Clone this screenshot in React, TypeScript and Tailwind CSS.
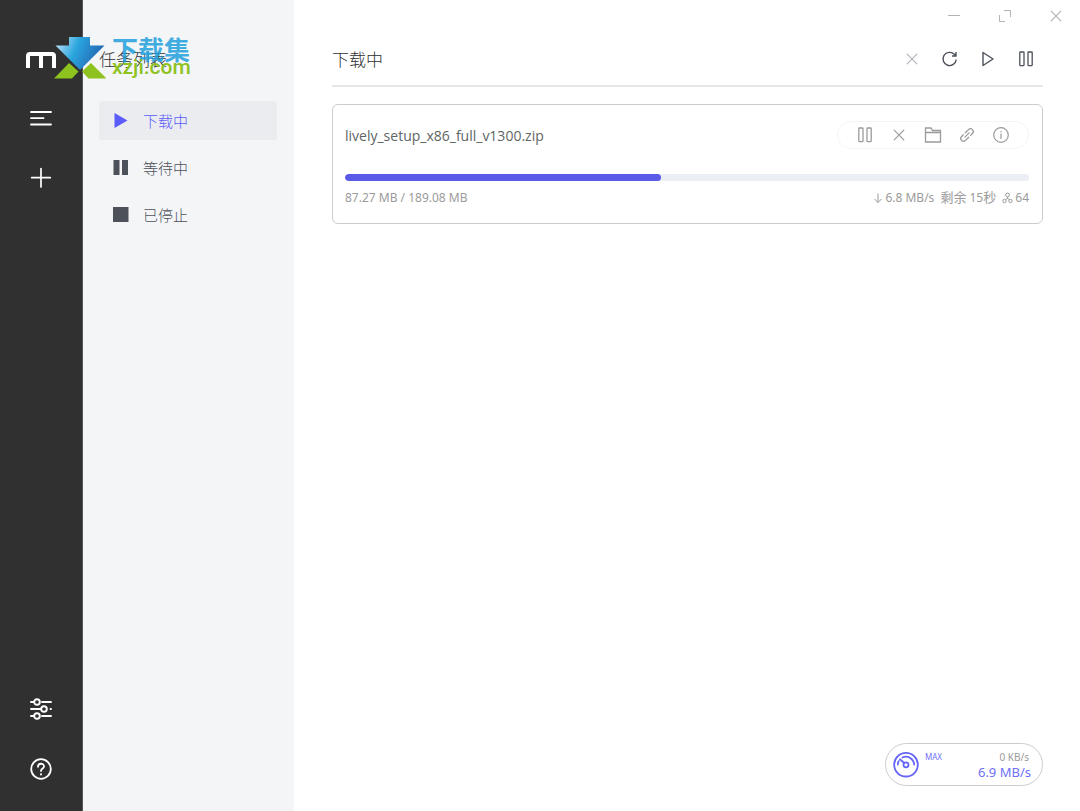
import React, { useState } from 'react';

const PauseIcon = ({ size = 18 }: { size?: number }) => (
  <svg width={size} height={size} viewBox="0 0 18 18" fill="none" stroke="currentColor" strokeWidth="1.3">
    <rect x="2.8" y="2" width="4.2" height="13.6" rx="0.5" />
    <rect x="11" y="2" width="4.2" height="13.6" rx="0.5" />
  </svg>
);

const CrossIcon = ({ size = 18 }: { size?: number }) => (
  <svg width={size} height={size} viewBox="0 0 18 18" fill="none" stroke="currentColor" strokeWidth="1.2" strokeLinecap="round">
    <path d="M4.2 4.2l9.600 9.600M13.800 4.200L4.200 13.800" />
  </svg>
);

const Watermark = () => (
  <div className="pointer-events-none absolute top-[37px] left-[54px] flex h-[42px]">
    <svg width="52" height="42" viewBox="0 0 52 42" className="shrink-0">
      <defs>
        <linearGradient id="arrow" x1="0" y1="0.1" x2="1" y2="0.4">
          <stop offset="0" stopColor="#c2e6f8" />
          <stop offset="0.45" stopColor="#2aa5de" />
          <stop offset="1" stopColor="#2465b0" />
        </linearGradient>
      </defs>
      <path d="M15 0h21v8.500h14.500L26 33 1.500 8.500H15z" fill="url(#arrow)" />
      <path d="M15 26L24.500 34.500 18 41.500H0z" fill="#8dc21f" />
      <path d="M37 26L28 34.500 34.500 41.500H52.500z" fill="#8dc21f" />
    </svg>
    <div className="relative ml-1.5 w-20">
      <span className="absolute top-0 left-0 whitespace-nowrap font-['Noto_Sans_CJK_SC',sans-serif] text-[26px] leading-6 font-bold text-[#1f9fdc]/85">下载集</span>
      <span className="absolute top-[18px] left-0 whitespace-nowrap font-['Roboto',sans-serif] text-[21px] leading-6 font-medium text-[#8dc21f]">xzji.com</span>
    </div>
  </div>
);

const tasks = [
  {
    label: '下载中',
    icon: <path d="M2.500 1l13 7.500-13 7.500z" />,
  },
  {
    label: '等待中',
    icon: <path d="M1.500 1H7.500v15H1.500zM10 1H16v15H10z" />,
  },
  {
    label: '已停止',
    icon: <path d="M1 1h15.500v15H1z" />,
  },
];

const Aside = () => (
  <aside className="flex w-[83px] shrink-0 flex-col items-center border-r border-[#555] bg-[#303030] pt-[51px] pb-[30px] text-white">
    <svg width="30" height="17" viewBox="0 0 30 17" fill="none" stroke="currentColor" strokeWidth="4">
      <path d="M2 17V5q0-2 2-2H26q2 0 2 2V17M15 3V17" />
    </svg>
    <nav className="mt-[38px] flex flex-col gap-9">
      <button aria-label="任务列表" className="size-6">
        <svg width="24" height="24" viewBox="0 0 24 24" fill="none" stroke="currentColor" strokeWidth="1.8" strokeLinecap="round">
          <path d="M2 6h20M2 12.200h12.500M2 18.500h20" />
        </svg>
      </button>
      <button aria-label="新建任务" className="size-6">
        <svg width="24" height="24" viewBox="0 0 24 24" fill="none" stroke="currentColor" strokeWidth="1.7" strokeLinecap="round">
          <path d="M12 2.500v18.500M2.700 11.700h18.600" />
        </svg>
      </button>
    </nav>
    <nav className="mt-auto flex flex-col gap-9">
      <button aria-label="设置" className="size-6">
        <svg width="24" height="24" viewBox="0 0 24 24" fill="none" stroke="currentColor" strokeWidth="1.9" strokeLinecap="round">
          <path d="M2 5h3M13 5h9M2 12h9.500M21.500 12h.5M2 19h3M13 19h9" />
          <circle cx="8" cy="5" r="2.800" />
          <circle cx="15" cy="12" r="2.800" />
          <circle cx="8" cy="19" r="2.800" />
        </svg>
      </button>
      <button aria-label="帮助" className="size-6">
        <svg width="24" height="24" viewBox="0 0 24 24" fill="none" stroke="currentColor" strokeWidth="1.8" strokeLinecap="round">
          <circle cx="12" cy="12" r="9.800" />
          <path d="M9 9.800c0-4 6-4 6-.4 0 2.200-3 2.200-3 4.600" />
          <path d="M12 17.300v.2" strokeWidth="2" />
        </svg>
      </button>
    </nav>
  </aside>
);

const TaskCard = () => (
  <article className="rounded-md border border-[#ccc] pt-4 pr-[13px] pb-[17px] pl-3">
    <div className="flex h-7 items-center justify-between">
      <h2 className="font-['Open_Sans',sans-serif] text-[14px] text-[#606663]">lively_setup_x86_full_v1300.zip</h2>
      <div className="flex h-7 items-center gap-4 rounded-full border border-[#f5f5f5] px-[18px] text-[#9b9b9b]">
        <button aria-label="暂停"><PauseIcon /></button>
        <button aria-label="删除"><CrossIcon /></button>
        <button aria-label="打开文件夹">
          <svg width="18" height="18" viewBox="0 0 18 18" fill="none" stroke="currentColor" strokeWidth="1.3">
            <path d="M1.500 16V2h5.500l1.500 2.500h8v11.500zM1.500 6.500h15" />
          </svg>
        </button>
        <button aria-label="复制链接">
          <svg width="18" height="18" viewBox="0 0 24 24" fill="none" stroke="currentColor" strokeWidth="1.7" strokeLinecap="round">
            <g transform="rotate(-45 12 12)">
              <path d="M12.500 8.300h6a3.700 3.700 0 0 1 0 7.400h-3.500M11.500 15.700h-6a3.700 3.700 0 0 1 0-7.400H9M8 12h8" />
            </g>
          </svg>
        </button>
        <button aria-label="任务详情">
          <svg width="18" height="18" viewBox="0 0 18 18" fill="none" stroke="currentColor" strokeWidth="1.200">
            <circle cx="9" cy="9" r="7.300" />
            <path d="M9 7.500V13M9 5v1.300" />
          </svg>
        </button>
      </div>
    </div>
    <div className="mt-[25px] h-[7px] overflow-hidden rounded-full bg-[#ebeef5]">
      <div className="h-full rounded-full bg-[#5b5bea]" style={{ width: `${(87.27 / 189.08) * 100}%` }} />
    </div>
    <div className="mt-2 flex items-center justify-between text-xs leading-4 text-[#9b9b9b]">
      <span>87.27 MB / 189.08 MB</span>
      <div className="flex items-center gap-1.5">
        <span className="flex items-center gap-0.5">
          <svg width="10" height="12" viewBox="0 0 10 12" fill="none" stroke="currentColor">
            <path d="M5 1.500v9M1.500 7L5 10.500 8.500 7" />
          </svg>
          6.8 MB/s
        </span>
        <span><span className="text-[13px]">剩余</span> 15<span className="text-[13px]">秒</span></span>
        <span className="flex items-center gap-0.5">
          <svg width="11" height="12" viewBox="0 0 11 12" fill="none" stroke="currentColor">
            <circle cx="5.500" cy="3" r="1.900" />
            <circle cx="2.500" cy="9" r="1.700" />
            <circle cx="8.500" cy="9" r="1.700" />
            <path d="M5.500 5v1.500L3.500 7.500M5.500 6.500l2 1" />
          </svg>
          64
        </span>
      </div>
    </div>
  </article>
);

const Speedometer = () => (
  <div className="absolute right-[37px] bottom-[25px] flex h-[43px] w-[158px] items-center rounded-full border border-[#ccc] bg-white pr-[11px] pl-[7px]">
    <svg width="26" height="26" viewBox="0 0 26 26" fill="none" stroke="#6464f8" strokeWidth="1.800" strokeLinecap="round">
      <circle cx="13" cy="12.700" r="11.800" />
      <path d="M4.800 12.500a8.300 8.300 0 0 1 .9-3.400M9.500 5.500a8.300 8.300 0 0 1 11.700 7M11.200 11L7 7.300" />
      <circle cx="13" cy="12.800" r="2.500" />
    </svg>
    <span className="mb-4 ml-1.5 text-[8px] leading-3 text-[#6f6ff8]">MAX</span>
    <div className="ml-auto flex flex-col items-end">
      <span className="pr-0.5 text-[10px] leading-[14px] text-[#9b9b9b]">0 KB/s</span>
      <span className="text-[13px] leading-4 text-[#6f6ff8]">6.9 MB/s</span>
    </div>
  </div>
);

const App: React.FC = () => {
  const [current, setCurrent] = useState(0);

  return (
    <div className="relative flex min-h-screen bg-white font-['Noto_Sans','Noto_Sans_CJK_SC',sans-serif]">
      <Aside />

      {/* Task categories */}
      <div className="w-[211px] shrink-0 bg-[#f4f5f7] pt-12 pr-[17px] pl-4">
        <h1 className="text-[17px] leading-6 font-light text-[#303133]">任务列表</h1>
        <ul className="mt-[29px] flex flex-col gap-2">
          {tasks.map((task, i) => (
            <li key={task.label}>
              <button
                onClick={() => setCurrent(i)}
                className={`flex h-[39px] w-full items-center gap-[14px] rounded-[3px] px-[13px] text-[15px] font-light ${
                  i === current ? 'bg-[#eaecf0] text-[#5b5bfa]' : 'text-[#4d515a]'
                }`}
              >
                <svg width="17" height="17" viewBox="0 0 17 17" fill="currentColor">{task.icon}</svg>
                <span className="pt-0.5">{task.label}</span>
              </button>
            </li>
          ))}
        </ul>
      </div>

      {/* Current tasks */}
      <main className="min-w-0 flex-1 pr-[37px] pl-[38px]">
        <header className="mt-[34px] flex h-[53px] items-center justify-between border-b-2 border-[#e6e6e6]">
          <h1 className="text-[17px] leading-6 font-light text-[#303133]">下载中</h1>
          <div className="flex items-center gap-5 pr-2 pb-0.5 text-[#4d515a]">
            <button aria-label="删除任务" className="text-[#b0b3b9]"><CrossIcon /></button>
            <button aria-label="刷新">
              <svg width="18" height="18" viewBox="0 0 18 18" fill="none" stroke="currentColor" strokeWidth="1.400">
                <path d="M15.200 9.500a6.600 6.600 0 1 1-1.900-5.200l1.500 1.500M15 2v4H11" />
              </svg>
            </button>
            <button aria-label="全部开始">
              <svg width="18" height="18" viewBox="0 0 18 18" fill="none" stroke="currentColor" strokeWidth="1.400" strokeLinejoin="round">
                <path d="M4 2.500v13L14 9z" />
              </svg>
            </button>
            <button aria-label="全部暂停"><PauseIcon /></button>
          </div>
        </header>
        <div className="mt-[17px]">
          <TaskCard />
        </div>
      </main>

      {/* Window controls */}
      <div className="absolute top-[7px] right-[15px] flex gap-[33px] text-[#b3b3b3]">
        <button aria-label="最小化">
          <svg width="18" height="18" viewBox="0 0 18 18" stroke="currentColor"><path d="M3 8.500h12" /></svg>
        </button>
        <button aria-label="最大化">
          <svg width="18" height="18" viewBox="0 0 18 18" fill="none" stroke="currentColor"><path d="M8 3.500h6.500V10M3.500 8v6.500H9" /></svg>
        </button>
        <button aria-label="关闭"><CrossIcon /></button>
      </div>

      <Speedometer />
      <Watermark />
    </div>
  );
};

export default App;
